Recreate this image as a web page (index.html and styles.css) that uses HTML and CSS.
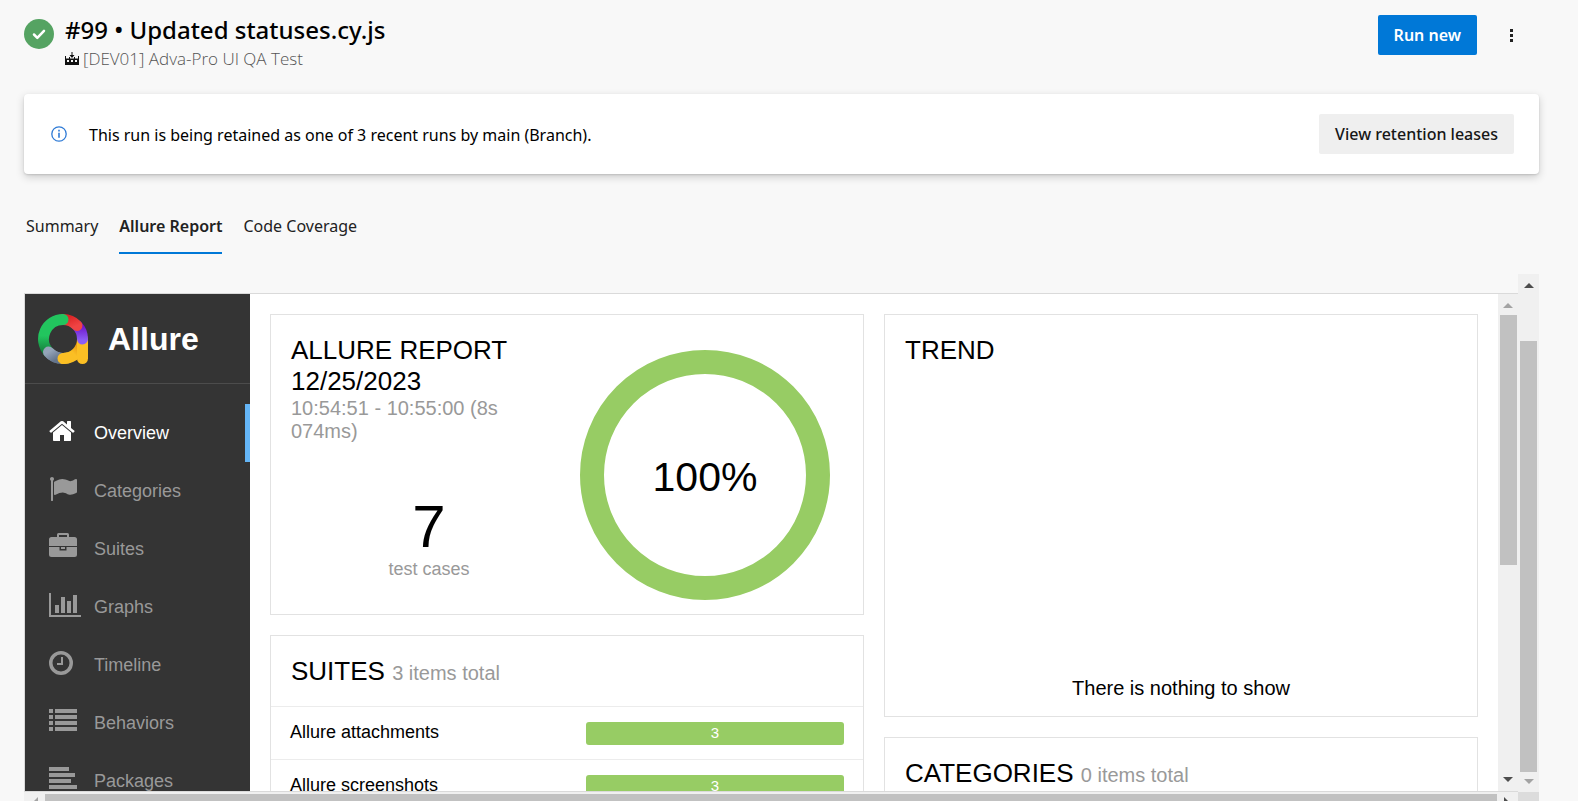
FILE: index.html
```html
<!DOCTYPE html>
<html lang="en">
<head>
<meta charset="utf-8">
<meta name="viewport" content="width=device-width, initial-scale=1">
<title>#99 • Updated statuses.cy.js</title>
<link rel="stylesheet" href="styles.css">
</head>
<body>
<div class="page">
  <header class="run-header">
    <svg class="run-status" viewBox="0 0 30 30" role="img" aria-label="Succeeded"><circle cx="15" cy="15" r="15" fill="#55a362"/><path d="M10 15.500l3.300 3.300 6.700-7" fill="none" stroke="#fff" stroke-width="2.500" stroke-linecap="round" stroke-linejoin="round"/></svg>
    <div class="run-heading">
      <h1 class="run-title">#99 • Updated statuses.cy.js</h1>
      <p class="run-pipeline">
        <svg class="pipeline-icon" viewBox="0 0 14 14" aria-hidden="true"><path d="M6.500 0h1v3h2L7 6 4.500 3h2zM0 4h1v2.500h3V5h1v1.500h4V5h1v1.500h3V4h1v9H0zM2 8v2h2V8zM6 8v2h2V8zM10 8v2h2V8z" fill="#111" fill-rule="evenodd"/></svg>
        <span>[DEV01] Adva-Pro UI QA Test</span>
      </p>
    </div>
    <button class="button button-primary" type="button">Run new</button>
    <button class="more-button" type="button" aria-label="More actions"><svg viewBox="0 0 3 13" width="3" height="13" fill="#222"><path d="M0 0h3v3H0zM0 5h3v3H0zM0 10h3v3H0z"/></svg></button>
  </header>

  <section class="banner">
    <svg class="info-icon" viewBox="0 0 16 16" aria-hidden="true"><circle cx="8" cy="8" r="7.200" fill="none" stroke="#2f7bd6" stroke-width="1.300"/><path d="M7.200 3.800h1.600v1.600H7.200zM7.200 6.800h1.600v5H7.200z" fill="#2f7bd6"/></svg>
    <p class="banner-text">This run is being retained as one of 3 recent runs by main (Branch).</p>
    <button class="button button-subtle" type="button">View retention leases</button>
  </section>

  <nav class="tabs" aria-label="Run views">
    <a class="tab" href="#summary">Summary</a>
    <a class="tab tab-active" href="#allure" aria-current="page">Allure Report</a>
    <a class="tab" href="#coverage">Code Coverage</a>
  </nav>

  <main class="viewer">
    <div class="viewer-main">
      <div class="report">
        <aside class="sidebar">
          <div class="brand">
            <svg class="brand-logo" viewBox="0 0 50 50" aria-hidden="true">
              <defs>
                <linearGradient id="green" x1="0" y1="0" x2="0" y2="1"><stop offset=".5" stop-color="#22c55e"/><stop offset="1" stop-color="#15803d"/></linearGradient>
                <linearGradient id="red" x1="0" y1="0" x2="1" y2="1"><stop offset="0" stop-color="#dc2626"/><stop offset="1" stop-color="#ef4444"/></linearGradient>
                <linearGradient id="violet" gradientUnits="userSpaceOnUse" x1="44" y1="11" x2="44" y2="26"><stop offset="0" stop-color="#6d11c9"/><stop offset="1" stop-color="#8b5cf6"/></linearGradient>
                <linearGradient id="gray" x1="0" y1="0" x2="1" y2="1"><stop offset="0" stop-color="#94a3b8"/><stop offset="1" stop-color="#64748b"/></linearGradient>
                <linearGradient id="amber" x1="0" y1="1" x2="1" y2="0"><stop offset=".4" stop-color="#fbbf24"/><stop offset="1" stop-color="#d97706"/></linearGradient>
              </defs>
              <g fill="none" stroke-width="11" stroke-linecap="round">
                <path d="M25 44.500A19.500 19.500 0 0 1 10.500 38" stroke="url(#gray)"/>
                <path d="M44.500 25A19.500 19.500 0 0 1 25 44.500" stroke="url(#amber)"/>
                <path d="M44.500 27V44.500" stroke="#fbbf24"/>
                <path d="M39 11.500A19.500 19.500 0 0 1 44.500 25" stroke="url(#violet)"/>
                <path d="M25 5.500A19.500 19.500 0 0 1 39 11.500" stroke="url(#red)"/>
                <path d="M10.500 38A19.500 19.500 0 0 1 25 5.500" stroke="url(#green)"/>
                <path d="M21 44.100A19.500 19.500 0 0 1 10.500 38" stroke="url(#gray)"/>
                <path d="M30 43.900A19.500 19.500 0 0 1 25 44.500" stroke="#fbbf24"/>
              </g>
            </svg>
            <span class="brand-name">Allure</span>
          </div>
          <nav class="menu" aria-label="Report sections">
            <a class="menu-item menu-item-active" href="#overview"><svg class="menu-icon" viewBox="64 0 2048 1792"><path d="M1472 992v480q0 26-19 45t-45 19h-384v-384h-256v384h-384q-26 0-45-19t-19-45v-480q0-1 .5-3t.5-3l575-474 575 474q1 2 1 6zm223-69l-62 74q-8 9-21 11h-3q-13 0-21-7l-692-577-692 577q-12 8-24 7-13-2-21-11l-62-74q-8-10-7-23.500t11-21.500l719-599q32-26 76-26t76 26l244 204v-195q0-14 9-23t23-9h192q14 0 23 9t9 23v408l219 182q10 8 11 21.500t-7 23.500z"/></svg>Overview</a>
            <a class="menu-item" href="#categories"><svg class="menu-icon" viewBox="0 0 2048 1792"><path d="M320 256q0 72-64 110v1266q0 13-9.500 22.500t-22.500 9.500h-64q-13 0-22.500-9.500t-9.500-22.500v-1266q-64-38-64-110 0-53 37.500-90.500t90.500-37.500 90.500 37.500 37.500 90.500zm1472 64v763q0 25-12.500 38.500t-39.500 27.500q-215 116-369 116-61 0-123.500-22t-108.500-48-115.500-48-142.500-22q-192 0-464 146-17 9-33 9-26 0-45-19t-19-45v-742q0-32 31-55 21-14 79-43 236-120 421-120 107 0 200 29t219 88q38 19 88 19 54 0 117.500-21t110-47 88-47 54.500-21q26 0 45 19t19 45z"/></svg>Categories</a>
            <a class="menu-item" href="#suites"><svg class="menu-icon" viewBox="0 0 32 28"><path fill-rule="evenodd" d="M8 4V1.500Q8 0 9.500 0h9Q20 0 20 1.500V4h5.500Q28 4 28 6.500V13H0V6.500Q0 4 2.500 4zM10 4h8V2h-8zM0 14h10.500v3.500h7V14H28v7.500q0 2.500-2.500 2.500h-23Q0 24 0 21.500zM12 14h4v2h-4z"/></svg>Suites</a>
            <a class="menu-item" href="#graphs"><svg class="menu-icon" viewBox="0 0 32 28"><path d="M0 2h2v22h30v2H0zM6 14h4v8H6zM12 6h4v16h-4zM18 10h4v12h-4zM24 4h4v18h-4z"/></svg>Graphs</a>
            <a class="menu-item" href="#timeline"><svg class="menu-icon" viewBox="0 0 32 28"><path fill-rule="evenodd" d="M12 2a12 12 0 1 1 0 24a12 12 0 1 1 0-24zM12 5.500a8.500 8.500 0 1 0 0 17a8.500 8.500 0 1 0 0-17zM12 8h2v8H8v-2h4z"/></svg>Timeline</a>
            <a class="menu-item" href="#behaviors"><svg class="menu-icon" viewBox="0 0 32 28"><path d="M0 2h4v4H0zM6 2h22v4H6zM0 8h4v4H0zM6 8h22v4H6zM0 14h4v4H0zM6 14h22v4H6zM0 20h4v4H0zM6 20h22v4H6z"/></svg>Behaviors</a>
            <a class="menu-item" href="#packages"><svg class="menu-icon" viewBox="0 0 32 28"><path d="M0 2h20v4H0zM0 8h26v4H0zM0 14h22v4H0zM0 20h28v4H0z"/></svg>Packages</a>
          </nav>
        </aside>

        <div class="widgets">
          <div class="column">
            <section class="card summary">
              <div class="summary-info">
                <h2 class="card-title">ALLURE REPORT 12/25/2023</h2>
                <p class="card-note">10:54:51 - 10:55:00 (8s 074ms)</p>
                <p class="total">7</p>
                <p class="total-label">test cases</p>
              </div>
              <div class="ring">100%</div>
            </section>
            <section class="card">
              <h2 class="card-title card-header">SUITES <span class="card-note">3 items total</span></h2>
              <a class="suite" href="#attachments"><span>Allure attachments</span><span class="bar">3</span></a>
              <a class="suite" href="#screenshots"><span>Allure screenshots</span><span class="bar">3</span></a>
            </section>
          </div>
          <div class="column">
            <section class="card trend">
              <h2 class="card-title">TREND</h2>
              <p class="trend-empty">There is nothing to show</p>
            </section>
            <section class="card">
              <h2 class="card-title card-header">CATEGORIES <span class="card-note">0 items total</span></h2>
            </section>
          </div>
        </div>

        <div class="scroll scroll-inner" aria-hidden="true">
          <svg class="arrow arrow-off" viewBox="0 0 10 5"><path d="M0 5L5 0l5 5z"/></svg>
          <div class="track"><div class="thumb thumb-inner"></div></div>
          <svg class="arrow" viewBox="0 0 10 5"><path d="M0 0h10L5 5z"/></svg>
        </div>
      </div>
      <div class="scroll-x" aria-hidden="true">
        <svg class="arrow-x arrow-off" viewBox="0 0 5 10"><path d="M5 0v10L0 5z"/></svg>
        <div class="thumb-x"></div>
        <svg class="arrow-x" viewBox="0 0 5 10"><path d="M0 0l5 5-5 5z"/></svg>
      </div>
    </div>
    <div class="viewer-side" aria-hidden="true">
      <div class="scroll scroll-outer">
        <svg class="arrow" viewBox="0 0 10 5"><path d="M0 5L5 0l5 5z"/></svg>
        <div class="track track-outer"><div class="thumb thumb-outer"></div></div>
        <svg class="arrow arrow-off" viewBox="0 0 10 5"><path d="M0 0h10L5 5z"/></svg>
      </div>
      <div class="corner"></div>
    </div>
  </main>
</div>
</body>
</html>
```
FILE: styles.css
```css
* { box-sizing: border-box; }

body, h1, h2, p { margin: 0; }

body {
  background: #f8f8f8;
  color: #000;
  font: 16px/24px "Segoe UI", "Noto Sans", sans-serif;
}

a { color: inherit; text-decoration: none; }

.page {
  display: flex;
  flex-direction: column;
  height: 100vh;
  overflow: hidden;
  padding: 15px 39px 0 24px;
}

/* Run header */
.run-header {
  display: flex;
  align-items: flex-start;
  height: 79px;
}

.run-status { width: 30px; height: 30px; margin: 4px 11px 0 0; }

.run-heading { flex: 1; }

.run-title { font-size: 24px; line-height: 30px; font-weight: 500; }

.run-pipeline {
  display: flex;
  align-items: center;
  gap: 4px;
  color: #555;
  font-family: "Segoe UI", "Open Sans", sans-serif;
  font-size: 17px;
  font-weight: 300;
  line-height: 28px;
}

.pipeline-icon { width: 14px; height: 14px; }

.button {
  height: 40px;
  padding: 0 16px;
  border: 0;
  border-radius: 2px;
  font: inherit;
  font-weight: 500;
  white-space: nowrap;
}

.button-primary { background: #0078d7; color: #fff; font-weight: 600; }

.button-subtle { background: #efefef; color: #161616; }

.more-button {
  display: flex;
  align-items: center;
  justify-content: center;
  width: 40px;
  height: 40px;
  margin: 0 8px 0 14px;
  padding: 0;
  border: 0;
  background: none;
}

/* Retention banner */
.banner {
  display: flex;
  align-items: center;
  padding: 20px 25px 20px 27px;
  border-radius: 4px;
  background: #fff;
  box-shadow: 0 3px 8px rgba(0, 0, 0, .18), 0 1px 2px rgba(0, 0, 0, .12);
}

.info-icon { width: 16px; height: 16px; margin-right: 22px; }

.banner-text { flex: 1; padding-top: 2px; }

/* Tabs */
.tabs { display: flex; gap: 21px; padding: 28px 0 20px 2px; }

.tab {
  height: 52px;
  line-height: 48px;
  border-bottom: 2px solid transparent;
  color: #222;
}

.tab-active { border-color: #0078d7; font-weight: 600; }

/* Report viewer */
.viewer {
  display: flex;
  flex: 1;
  min-height: 0;
  font-family: "Liberation Sans", Arial, sans-serif;
}

.viewer-main {
  display: flex;
  flex: 1;
  flex-direction: column;
  padding-top: 19px;
  min-width: 0;
}

.report {
  display: flex;
  flex: 1;
  min-height: 0;
  overflow: hidden;
  border: solid #dadada;
  border-width: 1px 0 1px 1px;
  background: #fff;
}

.sidebar { flex: none; width: 225px; background: #343434; }

.brand {
  display: flex;
  align-items: center;
  gap: 20px;
  height: 90px;
  padding-left: 13px;
  border-bottom: 1px solid #4c4c4c;
}

.brand-logo { width: 50px; height: 50px; }

.brand-name { color: #fff; font-size: 32px; font-weight: 700; line-height: 36px; }

.menu { padding-top: 20px; font-size: 18px; }

.menu-item {
  display: flex;
  align-items: center;
  gap: 13px;
  height: 58px;
  padding-left: 24px;
  color: #999;
}

.menu-item-active { border-right: 5px solid #64b5f6; color: #fff; }

.menu-icon { width: 32px; height: 28px; margin-bottom: 4px; fill: currentColor; }

.widgets {
  display: grid;
  flex: 1;
  grid-template-columns: 1fr 1fr;
  gap: 20px;
  padding: 20px;
}

.column { display: flex; flex-direction: column; gap: 20px; min-width: 0; }

.card { flex: none; border: 1px solid #e2e2e2; }

.card-title { font-size: 26px; font-weight: 400; line-height: 31px; }

.card-note { color: #999; font-size: 20px; line-height: 23px; }

.card-header { padding: 20px 20px 19px; }

.summary {
  display: grid;
  grid-template-columns: 1fr 1fr;
  height: 301px;
  padding: 20px;
}

.total { margin-top: 52px; font-size: 60px; line-height: 64px; text-align: center; }

.total-label { color: #999; font-size: 18px; line-height: 20px; text-align: center; }

.ring {
  display: flex;
  align-items: center;
  justify-content: center;
  justify-self: center;
  width: 250px;
  height: 250px;
  margin-top: 15px;
  padding-top: 4px;
  border: 24px solid #97cc64;
  border-radius: 50%;
  font-size: 41px;
}

.suite {
  display: grid;
  grid-template-columns: 1fr 258px;
  align-items: start;
  height: 53px;
  padding: 15px 19px;
  border-top: 1px solid #ececec;
  font-size: 18px;
  line-height: 21px;
}

.bar {
  height: 23px;
  border-radius: 3px;
  background: #97cc64;
  color: #fff;
  font-size: 15px;
  line-height: 21px;
  text-align: center;
}

.trend {
  display: flex;
  flex-direction: column;
  justify-content: space-between;
  height: 403px;
  padding: 20px 20px 16px;
}

.trend-empty { font-size: 20px; text-align: center; }

/* Scrollbars */
.scroll {
  display: flex;
  flex: none;
  flex-direction: column;
  align-items: center;
  background: #f0f0f0;
}

.scroll-inner { width: 20px; padding: 9px 0; }

.scroll-outer { flex: 1; width: 21px; padding: 9px 0 8px; }

.arrow { width: 10px; height: 5px; fill: #4d4d4d; }

.arrow-off { fill: #a3a3a3; }

.track { flex: 1; padding: 7px 0; }

.track-outer { padding-top: 53px; }

.thumb { width: 17px; background: #c1c1c1; }

.thumb-inner { height: 55%; }

.thumb-outer { height: 100%; }

.scroll-x {
  display: flex;
  gap: 7px;
  height: 9px;
  padding: 2px 9px 0;
  background: #f0f0f0;
  overflow: hidden;
}

.arrow-x { width: 5px; height: 10px; margin-top: 3px; fill: #4d4d4d; }

.arrow-x.arrow-off { fill: #a3a3a3; }

.thumb-x { flex: 1; background: #c1c1c1; }

.viewer-side { display: flex; flex-direction: column; }

.corner { height: 9px; background: #dcdcdc; }
```
